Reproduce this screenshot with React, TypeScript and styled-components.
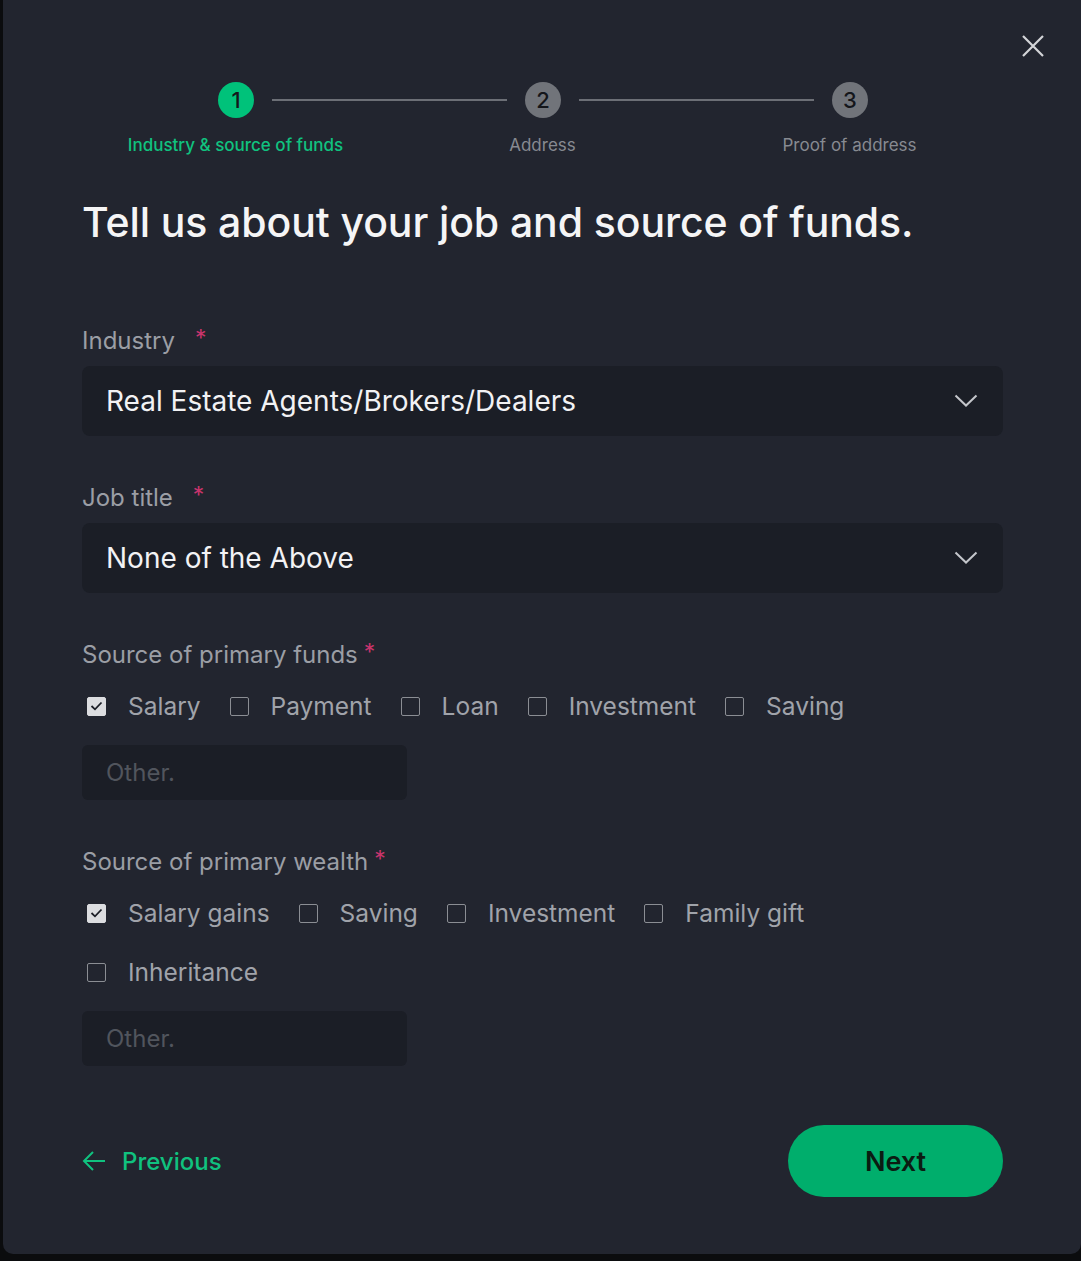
import React from 'react';
import styled, {createGlobalStyle} from 'styled-components';

const GlobalStyle = createGlobalStyle`
	html, body {
		margin: 0;
		padding: 0;
		background: #0b0c0e;
		overflow: hidden;
	}
	* {
		box-sizing: border-box;
	}
`;

const Modal = styled.div`
	position: relative;
	margin-left: 3px;
	width: 1078px;
	height: 1254px;
	background: #22252f;
	border-radius: 0 0 10px 10px;
	padding: 82px 78px 0 79px;
	font-family: Inter, 'Noto Sans', sans-serif;
`;

const CloseButton = styled.button`
	position: absolute;
	top: 33px;
	right: 35px;
	width: 26px;
	height: 26px;
	padding: 0;
	border: none;
	background: transparent;
	display: flex;
	align-items: center;
	justify-content: center;
	cursor: pointer;
`;

const StepRow = styled.div`
	display: flex;
	align-items: center;
	gap: 18px;
	padding: 0 135px 0 136px;
`;

const StepCircle = styled.div<{$active?: boolean}>`
	width: 36px;
	height: 36px;
	border-radius: 50%;
	flex: none;
	display: flex;
	align-items: center;
	justify-content: center;
	background: ${(p) => (p.$active ? '#00c27a' : '#71747a')};
	color: #14161b;
	font-size: 22px;
	font-weight: 500;
`;

const StepLine = styled.div`
	flex: 1;
	height: 2px;
	background: #6c6f76;
`;

const StepLabels = styled.div`
	display: grid;
	grid-template-columns: repeat(3, 1fr);
	margin-top: 16px;
`;

const StepLabel = styled.div<{$active?: boolean}>`
	text-align: center;
	font-size: 17px;
	line-height: 22px;
	font-weight: ${(p) => (p.$active ? 500 : 400)};
	color: ${(p) => (p.$active ? '#10c27f' : '#878a91')};
`;

const Heading = styled.h1`
	margin: 42px 0 0;
	font-size: 41px;
	line-height: 48px;
	font-weight: 500;
	color: #f5f5f6;
	letter-spacing: -0.1px;
`;

const Field = styled.div<{$first?: boolean}>`
	margin-top: ${(p) => (p.$first ? 80 : 47)}px;
`;

const Label = styled.div`
	font-size: 24px;
	line-height: 30px;
	color: #9b9ea5;
	display: flex;
	align-items: flex-start;
`;

const Required = styled.span<{$wide?: boolean}>`
	color: #c9346c;
	margin-left: ${(p) => (p.$wide ? 20 : 6)}px;
	font-size: 23px;
	line-height: 24px;
`;

const Select = styled.div`
	margin-top: 10px;
	height: 70px;
	background: #1b1e26;
	border-radius: 8px;
	display: flex;
	align-items: center;
	justify-content: space-between;
	padding: 0 25px 0 24px;
	font-size: 28px;
	color: #f2f2f4;
`;

const CheckGroup = styled.div`
	display: flex;
	flex-wrap: wrap;
	column-gap: 24px;
	row-gap: 29px;
	margin-top: 21px;
	max-width: 800px;
`;

const CheckItem = styled.label`
	display: flex;
	align-items: center;
	height: 30px;
	font-size: 24.5px;
	color: #a0a3aa;
	cursor: pointer;
`;

const Box = styled.span<{$checked?: boolean}>`
	width: 19px;
	height: 19px;
	margin: 0 22px 0 5px;
	border-radius: 2px;
	display: flex;
	align-items: center;
	justify-content: center;
	background: ${(p) => (p.$checked ? '#dcdde0' : 'transparent')};
	border: 1.5px solid ${(p) => (p.$checked ? '#dcdde0' : '#8b8e94')};
`;

const OtherInput = styled.input`
	display: block;
	margin-top: 24px;
	width: 325px;
	height: 55px;
	border: none;
	outline: none;
	border-radius: 6px;
	background: #1b1e26;
	padding: 0 24px;
	font-family: inherit;
	font-size: 24px;
	color: #f2f2f4;
	&::placeholder {
		color: #51555d;
	}
`;

const Footer = styled.div`
	margin-top: 59px;
	display: flex;
	align-items: center;
	justify-content: space-between;
`;

const PrevButton = styled.button`
	display: flex;
	align-items: center;
	gap: 16px;
	padding: 0;
	border: none;
	background: transparent;
	font-family: inherit;
	font-size: 24px;
	font-weight: 500;
	color: #10c27f;
	cursor: pointer;
`;

const NextButton = styled.button`
	width: 215px;
	height: 72px;
	border: none;
	border-radius: 36px;
	background: #00ae6c;
	font-family: inherit;
	font-size: 27px;
	font-weight: 600;
	color: #0b1c12;
	cursor: pointer;
`;

const steps = ['Industry & source of funds', 'Address', 'Proof of address'];

const fundOptions = [
	{label: 'Salary', checked: true},
	{label: 'Payment'},
	{label: 'Loan'},
	{label: 'Investment'},
	{label: 'Saving'},
];

const wealthOptions = [
	{label: 'Salary gains', checked: true},
	{label: 'Saving'},
	{label: 'Investment'},
	{label: 'Family gift'},
	{label: 'Inheritance'},
];

const Chevron = () => (
	<svg width="24" height="14" viewBox="0 0 24 14" fill="none">
		<path d="M1.5 1.5 L12 11.5 L22.5 1.5" stroke="#c4c6cb" strokeWidth="2" />
	</svg>
);

const Check = () => (
	<svg width="13" height="10" viewBox="0 0 13 10" fill="none">
		<path d="M1.5 5 L5 8.3 L11.5 1.5" stroke="#1b1e26" strokeWidth="1.8" />
	</svg>
);

const Options = ({items}: {items: {label: string; checked?: boolean}[]}) => (
	<CheckGroup>
		{items.map((o) => (
			<CheckItem key={o.label}>
				<Box $checked={o.checked}>{o.checked ? <Check /> : null}</Box>
				{o.label}
			</CheckItem>
		))}
	</CheckGroup>
);

export default function App() {
	return (
		<>
			<GlobalStyle />
			<Modal>
				<CloseButton aria-label="Close">
					<svg width="24" height="24" viewBox="0 0 24 24" fill="none">
						<path d="M2 2 L22 22 M22 2 L2 22" stroke="#d4d5d8" strokeWidth="2.2" />
					</svg>
				</CloseButton>

				<StepRow>
					<StepCircle $active>1</StepCircle>
					<StepLine />
					<StepCircle>2</StepCircle>
					<StepLine />
					<StepCircle>3</StepCircle>
				</StepRow>
				<StepLabels>
					{steps.map((s, i) => (
						<StepLabel key={s} $active={i === 0}>
							{s}
						</StepLabel>
					))}
				</StepLabels>

				<Heading>Tell us about your job and source of funds.</Heading>

				<Field $first>
					<Label>
						Industry<Required $wide>*</Required>
					</Label>
					<Select>
						Real Estate Agents/Brokers/Dealers
						<Chevron />
					</Select>
				</Field>

				<Field>
					<Label>
						Job title<Required $wide>*</Required>
					</Label>
					<Select>
						None of the Above
						<Chevron />
					</Select>
				</Field>

				<Field>
					<Label>
						Source of primary funds<Required>*</Required>
					</Label>
					<Options items={fundOptions} />
					<OtherInput placeholder="Other." />
				</Field>

				<Field>
					<Label>
						Source of primary wealth<Required>*</Required>
					</Label>
					<Options items={wealthOptions} />
					<OtherInput placeholder="Other." />
				</Field>

				<Footer>
					<PrevButton>
						<svg width="24" height="22" viewBox="0 0 24 22" fill="none">
							<path d="M23 11 H2 M11 2 L2 11 L11 20" stroke="#10c27f" strokeWidth="2" />
						</svg>
						Previous
					</PrevButton>
					<NextButton>Next</NextButton>
				</Footer>
			</Modal>
		</>
	);
}
